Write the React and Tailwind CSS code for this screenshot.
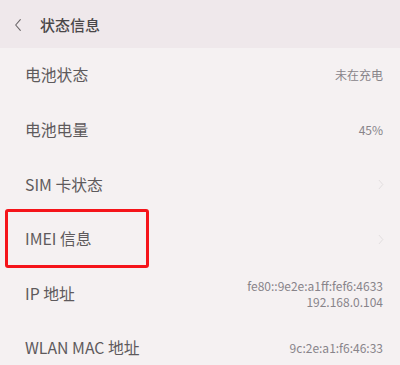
const rows = [
  { label: '电池状态', value: ['未在充电'] },
  { label: '电池电量', value: ['45%'] },
  { label: 'SIM 卡状态', chevron: true },
  { label: 'IMEI 信息', chevron: true, marked: true },
  { label: 'IP 地址', value: ['fe80::9e2e:a1ff:fef6:4633', '192.168.0.104'] },
  { label: 'WLAN MAC 地址', value: ['9c:2e:a1:f6:46:33'] },
];

const Chevron = ({ className }) => (
  <svg viewBox="0 0 10 18" className={className} fill="none" stroke="currentColor" strokeWidth="1.3" strokeLinecap="round" strokeLinejoin="round">
    <path d="M2 2l6 7-6 7" />
  </svg>
);

export default function App() {
  return (
    <div
      className="w-[400px] h-[365px] overflow-hidden bg-[#f5f1f2]"
      style={{ fontFamily: '"Noto Sans CJK SC", "Liberation Sans", sans-serif' }}
    >
      {/* header */}
      <div className="h-[48px] bg-[#efe8eb] flex items-center pl-[14px] pt-[2px]">
        <svg viewBox="0 0 10 18" className="w-[8px] h-[14px] text-[#6a6668]" fill="none" stroke="currentColor" strokeWidth="1.4" strokeLinecap="round" strokeLinejoin="round">
          <path d="M8 2L2 9l6 7" />
        </svg>
        <span className="ml-[18px] text-[15px] text-[#4a4749] font-medium">状态信息</span>
      </div>

      {rows.map((r) => (
        <div key={r.label} className="relative h-[54.6px] flex items-center justify-between pl-[25px] pr-[17px]">
          <span className="text-[15.8px] text-[#5e5a5c]">{r.label}</span>
          {r.value && (
            <div className="flex flex-col items-end text-[12px] leading-[16px] text-[#88848a]">
              {r.value.map((v) => (
                <span key={v}>{v}</span>
              ))}
            </div>
          )}
          {r.chevron && <Chevron className="w-[6px] h-[11px] text-[#dcd8da] mr-[-1px]" />}
          {r.marked && (
            <div className="absolute left-[5px] top-[-3px] w-[144px] h-[59px] border-[3px] border-[#f5141a] rounded-[3px]" />
          )}
        </div>
      ))}
    </div>
  );
}
